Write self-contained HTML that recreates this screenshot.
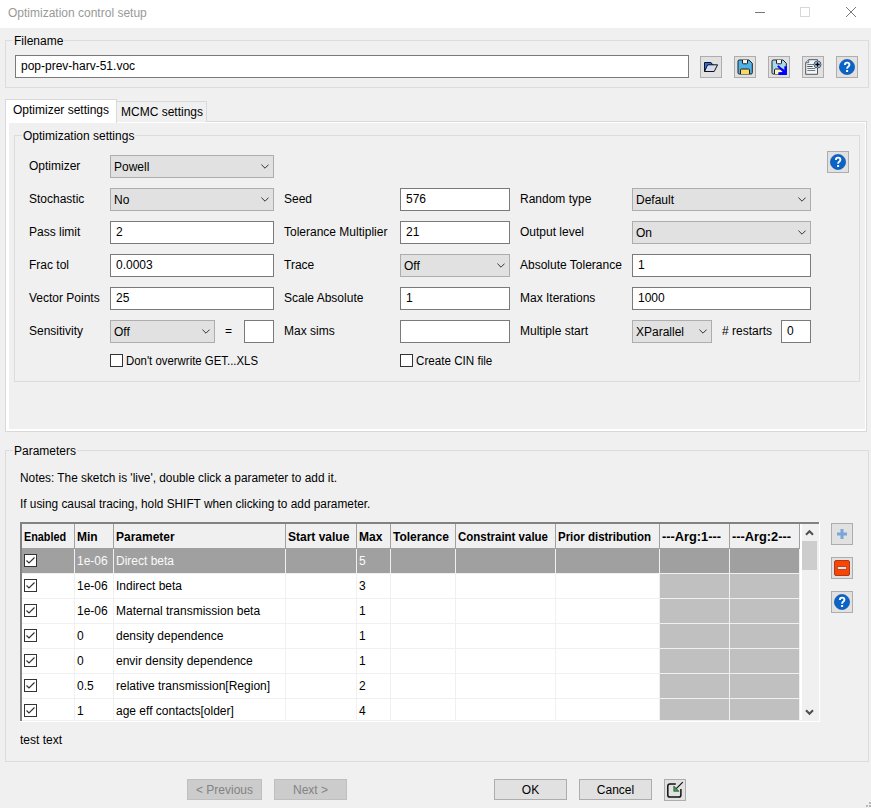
<!DOCTYPE html>
<html><head><meta charset="utf-8">
<style>
*{box-sizing:border-box;margin:0;padding:0}
html,body{width:871px;height:808px;overflow:hidden;background:#f0f0f0;font-family:"Liberation Sans",sans-serif;font-size:12px;color:#000}
.a{position:absolute}
.t{position:absolute;line-height:14px;white-space:nowrap}
.gb{position:absolute;border:1px solid #dcdcdc}
.inp{position:absolute;background:#fff;border:1px solid #7a7a7a;height:23px}
.cmb{position:absolute;background:#e1e1e1;border:1px solid #adadad;height:23px}
.chev{position:absolute;width:8px;height:5px}
.btn{position:absolute;background:#e1e1e1;border:1px solid #adadad;width:22px;height:22px}
.cb{position:absolute;width:13px;height:13px;border:1px solid #333;background:#fff}
.lbl{background:#f0f0f0;padding:0 1px}
</style></head><body>
<!-- title bar -->
<div class="a" style="left:0;top:0;width:871px;height:28px;background:#fff"></div>
<div class="t" style="left:8px;top:6px;color:#999">Optimization control setup</div>
<div class="a" style="left:755px;top:12px;width:10px;height:1px;background:#777"></div>
<div class="a" style="left:800px;top:7px;width:10px;height:10px;border:1px solid #d8d8d8"></div>
<svg class="a" style="left:845px;top:6px" width="12" height="12"><path d="M1 1L11 11M11 1L1 11" stroke="#7a7a7a" stroke-width="1"/></svg>

<!-- filename group -->
<div class="gb" style="left:5px;top:40px;width:864px;height:48px"></div>
<div class="t lbl" style="left:13px;top:34px">Filename</div>
<div class="inp" style="left:15px;top:55px;width:674px"></div>
<div class="t" style="left:21px;top:59px">pop-prev-harv-51.voc</div>
<div class="btn" style="left:700px;top:56px"><svg class="a" style="left:-1px;top:-1px" width="22" height="22" viewBox="0 0 22 22"><path d="M4.5 15.5V6.5H11L12 8.3H13V15.5Z" fill="#2a6cf5" stroke="#111" stroke-width="1"/><path d="M7.6 8.8H17.6L14.2 15.5H4.6Z" fill="#d4dcf6" stroke="#111" stroke-width="1"/></svg></div>
<div class="btn" style="left:734px;top:56px"><svg class="a" style="left:-1px;top:-1px" width="22" height="22" viewBox="0 0 22 22"><path d="M5.2 4H15L18.3 7.3V16.8Q18.3 18 17.1 18H5.2Q4 18 4 16.8V5.2Q4 4 5.2 4Z" fill="#4db3ea" stroke="#1e1e1e" stroke-width="1"/><path d="M8.5 4V7Q8.5 7.8 9.3 7.8H12.7Q13.5 7.8 13.5 7V4" fill="#f4f4f4" stroke="#1e1e1e" stroke-width="1"/><path d="M6.5 18V13.9Q6.5 13 7.4 13H14.6Q15.5 13 15.5 13.9V18" fill="#fbd864" stroke="#1e1e1e" stroke-width="1"/></svg></div>
<div class="btn" style="left:768px;top:56px"><svg class="a" style="left:-1px;top:-1px" width="22" height="22" viewBox="0 0 22 22"><path d="M5.2 4H15L18.3 7.3V16.8Q18.3 18 17.1 18H5.2Q4 18 4 16.8V5.2Q4 4 5.2 4Z" fill="#a9d9f2" stroke="#1e1e1e" stroke-width="1"/><path d="M8.5 4V7Q8.5 7.8 9.3 7.8H12.7Q13.5 7.8 13.5 7V4" fill="#f4f4f4" stroke="#1e1e1e" stroke-width="1"/><path d="M6.5 18V13.9Q6.5 13 7.4 13H14.6Q15.5 13 15.5 13.9V18" fill="#fff2b8" stroke="#1e1e1e" stroke-width="1"/><path d="M9.2 10.6L10.6 9.2L16.2 14.6L16.4 10.2H18.9V18.9H10.3V16.3L14.7 16.1Z" fill="#0000ff"/></svg></div>
<div class="btn" style="left:802px;top:56px"><svg class="a" style="left:-1px;top:-1px" width="22" height="22" viewBox="0 0 22 22"><path d="M6.7 3.7H15.5V18.3H3.7V6.7Z" fill="#eef6fc" stroke="#555" stroke-width="1"/><path d="M3.7 6.7H6.7V3.7" fill="#a8d4f4" stroke="#555" stroke-width="0.8"/><path d="M5.3 8.5H12M5.3 10.5H10.5M5.3 12.5H13.3M5.3 14.5H13.3" stroke="#777" stroke-width="1"/><path d="M5.3 10.5H10.5" stroke="#555" stroke-width="1"/><circle cx="15.5" cy="8.5" r="3.5" fill="#a6d0f8" stroke="#445" stroke-width="0.9"/><path d="M15.5 6.3V10.7M13.3 8.5H17.7" stroke="#000" stroke-width="1.3"/></svg></div>
<div class="btn" style="left:836px;top:56px"><svg class="a" style="left:-1px;top:-1px" width="22" height="22" viewBox="0 0 22 22"><circle cx="11" cy="11" r="7.6" fill="#0a64c8" stroke="#00479a" stroke-width="0.6"/><path d="M8.9 8.9Q8.9 6.6 11.1 6.6Q13.4 6.6 13.4 8.7Q13.4 9.9 12.1 10.7Q11.1 11.4 11.1 12.7" fill="none" stroke="#fff" stroke-width="1.9"/><rect x="10.1" y="14" width="2" height="2" fill="#fff"/></svg></div>

<!-- tabs -->
<div class="a" style="left:5px;top:121px;width:862px;height:311px;border:1px solid #d9d9d9;background:#fff"></div>
<div class="a" style="left:9px;top:123px;width:856px;height:306px;background:#f0f0f0"></div>
<div class="a" style="left:116px;top:101px;width:91px;height:21px;border:1px solid #d9d9d9;border-bottom:none;background:#f0f0f0"></div>
<div class="a" style="left:5px;top:99px;width:112px;height:24px;border:1px solid #d9d9d9;border-bottom:none;background:#fff"></div>
<div class="t" style="left:13px;top:103px">Optimizer settings</div>
<div class="t" style="left:121px;top:105px">MCMC settings</div>

<!-- optimization group -->
<div class="gb" style="left:14px;top:135px;width:846px;height:247px"></div>
<div class="t lbl" style="left:22px;top:129px">Optimization settings</div>
<!--OPT-->
<div class="t" style="left:29px;top:159px">Optimizer</div>
<div class="cmb" style="left:110px;top:155px;width:164px"></div>
<div class="t" style="left:114px;top:160px">Powell</div>
<svg class="chev" style="left:261px;top:164px" viewBox="0 0 8 5"><path d="M0.4 0.6L4 4.2L7.6 0.6" fill="none" stroke="#333" stroke-width="1"/></svg>
<div class="t" style="left:29px;top:192px">Stochastic</div>
<div class="cmb" style="left:110px;top:188px;width:164px"></div>
<div class="t" style="left:114px;top:193px">No</div>
<svg class="chev" style="left:261px;top:197px" viewBox="0 0 8 5"><path d="M0.4 0.6L4 4.2L7.6 0.6" fill="none" stroke="#333" stroke-width="1"/></svg>
<div class="t" style="left:284px;top:192px">Seed</div>
<div class="inp" style="left:400px;top:188px;width:110px"></div>
<div class="t" style="left:406px;top:192px">576</div>
<div class="t" style="left:520px;top:192px">Random type</div>
<div class="cmb" style="left:632px;top:188px;width:179px"></div>
<div class="t" style="left:636px;top:193px">Default</div>
<svg class="chev" style="left:798px;top:197px" viewBox="0 0 8 5"><path d="M0.4 0.6L4 4.2L7.6 0.6" fill="none" stroke="#333" stroke-width="1"/></svg>
<div class="t" style="left:29px;top:225px">Pass limit</div>
<div class="inp" style="left:110px;top:221px;width:164px"></div>
<div class="t" style="left:116px;top:225px">2</div>
<div class="t" style="left:284px;top:225px">Tolerance Multiplier</div>
<div class="inp" style="left:400px;top:221px;width:110px"></div>
<div class="t" style="left:406px;top:225px">21</div>
<div class="t" style="left:520px;top:225px">Output level</div>
<div class="cmb" style="left:632px;top:221px;width:179px"></div>
<div class="t" style="left:636px;top:226px">On</div>
<svg class="chev" style="left:798px;top:230px" viewBox="0 0 8 5"><path d="M0.4 0.6L4 4.2L7.6 0.6" fill="none" stroke="#333" stroke-width="1"/></svg>
<div class="t" style="left:29px;top:258px">Frac tol</div>
<div class="inp" style="left:110px;top:254px;width:164px"></div>
<div class="t" style="left:116px;top:258px">0.0003</div>
<div class="t" style="left:284px;top:258px">Trace</div>
<div class="cmb" style="left:400px;top:254px;width:110px"></div>
<div class="t" style="left:404px;top:259px">Off</div>
<svg class="chev" style="left:497px;top:263px" viewBox="0 0 8 5"><path d="M0.4 0.6L4 4.2L7.6 0.6" fill="none" stroke="#333" stroke-width="1"/></svg>
<div class="t" style="left:520px;top:258px">Absolute Tolerance</div>
<div class="inp" style="left:632px;top:254px;width:179px"></div>
<div class="t" style="left:638px;top:258px">1</div>
<div class="t" style="left:29px;top:291px">Vector Points</div>
<div class="inp" style="left:110px;top:287px;width:164px"></div>
<div class="t" style="left:116px;top:291px">25</div>
<div class="t" style="left:284px;top:291px">Scale Absolute</div>
<div class="inp" style="left:400px;top:287px;width:110px"></div>
<div class="t" style="left:406px;top:291px">1</div>
<div class="t" style="left:520px;top:291px">Max Iterations</div>
<div class="inp" style="left:632px;top:287px;width:179px"></div>
<div class="t" style="left:638px;top:291px">1000</div>
<div class="t" style="left:29px;top:324px">Sensitivity</div>
<div class="cmb" style="left:110px;top:320px;width:105px"></div>
<div class="t" style="left:114px;top:325px">Off</div>
<svg class="chev" style="left:202px;top:329px" viewBox="0 0 8 5"><path d="M0.4 0.6L4 4.2L7.6 0.6" fill="none" stroke="#333" stroke-width="1"/></svg>
<div class="t" style="left:225px;top:324px">=</div>
<div class="inp" style="left:244px;top:320px;width:30px"></div>
<div class="t" style="left:284px;top:324px">Max sims</div>
<div class="inp" style="left:400px;top:320px;width:110px"></div>
<div class="t" style="left:520px;top:324px">Multiple start</div>
<div class="cmb" style="left:632px;top:320px;width:80px"></div>
<div class="t" style="left:636px;top:325px">XParallel</div>
<svg class="chev" style="left:699px;top:329px" viewBox="0 0 8 5"><path d="M0.4 0.6L4 4.2L7.6 0.6" fill="none" stroke="#333" stroke-width="1"/></svg>
<div class="t" style="left:722px;top:324px"># restarts</div>
<div class="inp" style="left:781px;top:320px;width:30px"></div>
<div class="t" style="left:787px;top:324px">0</div>
<div class="cb" style="left:110px;top:354px"></div>
<div class="t" style="left:126px;top:354px;transform:scaleX(0.95);transform-origin:0 0">Don't overwrite GET...XLS</div>
<div class="cb" style="left:400px;top:354px"></div>
<div class="t" style="left:416px;top:354px;transform:scaleX(0.97);transform-origin:0 0">Create CIN file</div>
<div class="btn" style="left:827px;top:151px"><svg class="a" style="left:-1px;top:-1px" width="22" height="22" viewBox="0 0 22 22"><circle cx="11" cy="11" r="7.6" fill="#0a64c8" stroke="#00479a" stroke-width="0.6"/><path d="M8.9 8.9Q8.9 6.6 11.1 6.6Q13.4 6.6 13.4 8.7Q13.4 9.9 12.1 10.7Q11.1 11.4 11.1 12.7" fill="none" stroke="#fff" stroke-width="1.9"/><rect x="10.1" y="14" width="2" height="2" fill="#fff"/></svg></div>
<!--/OPT-->
<!-- parameters group -->
<div class="gb" style="left:5px;top:450px;width:864px;height:312px"></div>
<div class="t lbl" style="left:13px;top:444px">Parameters</div>
<div class="t" style="left:20px;top:471px;transform:scaleX(0.987);transform-origin:0 0">Notes: The sketch is 'live', double click a parameter to add it.</div>
<div class="t" style="left:20px;top:497px;transform:scaleX(0.986);transform-origin:0 0">If using causal tracing, hold SHIFT when clicking to add parameter.</div>

<!--TBL-->
<div class="a" style="left:20px;top:522px;width:800px;height:200px;background:#fff"></div>
<div class="a" style="left:22px;top:524px;width:778px;height:24px;background:#f0f0f0"></div>
<div class="a" style="left:22px;top:548px;width:778px;height:1px;background:#a0a0a0"></div>
<div class="a" style="left:660px;top:549px;width:139px;height:171px;background:#c0c0c0"></div>
<div class="a" style="left:22px;top:549px;width:777px;height:24px;background:#a0a0a0"></div>
<div class="a" style="left:22px;top:573px;width:777px;height:1px;background:#f0f0f0"></div>
<div class="a" style="left:22px;top:598px;width:777px;height:1px;background:#f0f0f0"></div>
<div class="a" style="left:22px;top:623px;width:777px;height:1px;background:#f0f0f0"></div>
<div class="a" style="left:22px;top:648px;width:777px;height:1px;background:#f0f0f0"></div>
<div class="a" style="left:22px;top:673px;width:777px;height:1px;background:#f0f0f0"></div>
<div class="a" style="left:22px;top:698px;width:777px;height:1px;background:#f0f0f0"></div>
<div class="a" style="left:74px;top:524px;width:1px;height:24px;background:#a0a0a0"></div>
<div class="a" style="left:74px;top:549px;width:1px;height:171px;background:#f0f0f0"></div>
<div class="a" style="left:113px;top:524px;width:1px;height:24px;background:#a0a0a0"></div>
<div class="a" style="left:113px;top:549px;width:1px;height:171px;background:#f0f0f0"></div>
<div class="a" style="left:285px;top:524px;width:1px;height:24px;background:#a0a0a0"></div>
<div class="a" style="left:285px;top:549px;width:1px;height:171px;background:#f0f0f0"></div>
<div class="a" style="left:356px;top:524px;width:1px;height:24px;background:#a0a0a0"></div>
<div class="a" style="left:356px;top:549px;width:1px;height:171px;background:#f0f0f0"></div>
<div class="a" style="left:390px;top:524px;width:1px;height:24px;background:#a0a0a0"></div>
<div class="a" style="left:390px;top:549px;width:1px;height:171px;background:#f0f0f0"></div>
<div class="a" style="left:455px;top:524px;width:1px;height:24px;background:#a0a0a0"></div>
<div class="a" style="left:455px;top:549px;width:1px;height:171px;background:#f0f0f0"></div>
<div class="a" style="left:555px;top:524px;width:1px;height:24px;background:#a0a0a0"></div>
<div class="a" style="left:555px;top:549px;width:1px;height:171px;background:#f0f0f0"></div>
<div class="a" style="left:659px;top:524px;width:1px;height:24px;background:#a0a0a0"></div>
<div class="a" style="left:659px;top:549px;width:1px;height:171px;background:#f0f0f0"></div>
<div class="a" style="left:729px;top:524px;width:1px;height:24px;background:#a0a0a0"></div>
<div class="a" style="left:729px;top:549px;width:1px;height:171px;background:#f0f0f0"></div>
<div class="a" style="left:799px;top:524px;width:1px;height:24px;background:#a0a0a0"></div>
<div class="a" style="left:799px;top:549px;width:1px;height:171px;background:#f0f0f0"></div>
<div class="a" style="left:20px;top:522px;width:799px;height:2px;background:#828282"></div>
<div class="a" style="left:20px;top:522px;width:2px;height:199px;background:#828282"></div>
<div class="a" style="left:818px;top:524px;width:1px;height:197px;background:#f0f0f0"></div>
<div class="a" style="left:22px;top:720px;width:797px;height:1px;background:#f0f0f0"></div>
<div class="a" style="left:20px;top:721px;width:800px;height:1px;background:#fff"></div>
<div class="a" style="left:819px;top:522px;width:1px;height:199px;background:#fff"></div>
<div class="a" style="left:802px;top:524px;width:16px;height:196px;background:#f0f0f0"></div>
<div class="a" style="left:802px;top:541px;width:15px;height:29px;background:#cdcdcd"></div>
<svg class="a" style="left:805px;top:529px" width="9" height="7" viewBox="0 0 9 7"><path d="M1 5.8L4.5 2.3L8 5.8" fill="none" stroke="#505050" stroke-width="2.1"/></svg>
<svg class="a" style="left:805px;top:709px" width="9" height="7" viewBox="0 0 9 7"><path d="M1 1.2L4.5 4.7L8 1.2" fill="none" stroke="#505050" stroke-width="2.1"/></svg>
<div class="t" style="left:24px;top:530px;font-weight:bold;transform:scaleX(0.9);transform-origin:0 0">Enabled</div>
<div class="t" style="left:77px;top:530px;font-weight:bold;">Min</div>
<div class="t" style="left:116px;top:530px;font-weight:bold;">Parameter</div>
<div class="t" style="left:288px;top:530px;font-weight:bold;">Start value</div>
<div class="t" style="left:359px;top:530px;font-weight:bold;">Max</div>
<div class="t" style="left:393px;top:530px;font-weight:bold;">Tolerance</div>
<div class="t" style="left:458px;top:530px;font-weight:bold;transform:scaleX(0.957);transform-origin:0 0">Constraint value</div>
<div class="t" style="left:558px;top:530px;font-weight:bold;transform:scaleX(0.956);transform-origin:0 0">Prior distribution</div>
<div class="t" style="left:662px;top:530px;font-weight:bold;transform:scaleX(1.067);transform-origin:0 0">---Arg:1---</div>
<div class="t" style="left:732px;top:530px;font-weight:bold;transform:scaleX(1.067);transform-origin:0 0">---Arg:2---</div>
<div class="cb" style="left:24px;top:554px"><svg class="a" style="left:0;top:0" width="11" height="11" viewBox="1 1 11 11"><path d="M2.5 6.5L5 9L10.5 3.5" fill="none" stroke="#333" stroke-width="1.2"/></svg></div>
<div class="t" style="left:77px;top:554px;color:#fafafa">1e-06</div>
<div class="t" style="left:116px;top:554px;color:#fafafa">Direct beta</div>
<div class="t" style="left:359px;top:554px;color:#fafafa">5</div>
<div class="cb" style="left:24px;top:579px"><svg class="a" style="left:0;top:0" width="11" height="11" viewBox="1 1 11 11"><path d="M2.5 6.5L5 9L10.5 3.5" fill="none" stroke="#333" stroke-width="1.2"/></svg></div>
<div class="t" style="left:77px;top:579px;">1e-06</div>
<div class="t" style="left:116px;top:579px;">Indirect beta</div>
<div class="t" style="left:359px;top:579px;">3</div>
<div class="cb" style="left:24px;top:604px"><svg class="a" style="left:0;top:0" width="11" height="11" viewBox="1 1 11 11"><path d="M2.5 6.5L5 9L10.5 3.5" fill="none" stroke="#333" stroke-width="1.2"/></svg></div>
<div class="t" style="left:77px;top:604px;">1e-06</div>
<div class="t" style="left:116px;top:604px;">Maternal transmission beta</div>
<div class="t" style="left:359px;top:604px;">1</div>
<div class="cb" style="left:24px;top:629px"><svg class="a" style="left:0;top:0" width="11" height="11" viewBox="1 1 11 11"><path d="M2.5 6.5L5 9L10.5 3.5" fill="none" stroke="#333" stroke-width="1.2"/></svg></div>
<div class="t" style="left:77px;top:629px;">0</div>
<div class="t" style="left:116px;top:629px;">density dependence</div>
<div class="t" style="left:359px;top:629px;">1</div>
<div class="cb" style="left:24px;top:654px"><svg class="a" style="left:0;top:0" width="11" height="11" viewBox="1 1 11 11"><path d="M2.5 6.5L5 9L10.5 3.5" fill="none" stroke="#333" stroke-width="1.2"/></svg></div>
<div class="t" style="left:77px;top:654px;">0</div>
<div class="t" style="left:116px;top:654px;">envir density dependence</div>
<div class="t" style="left:359px;top:654px;">1</div>
<div class="cb" style="left:24px;top:679px"><svg class="a" style="left:0;top:0" width="11" height="11" viewBox="1 1 11 11"><path d="M2.5 6.5L5 9L10.5 3.5" fill="none" stroke="#333" stroke-width="1.2"/></svg></div>
<div class="t" style="left:77px;top:679px;">0.5</div>
<div class="t" style="left:116px;top:679px;">relative transmission[Region]</div>
<div class="t" style="left:359px;top:679px;">2</div>
<div class="cb" style="left:24px;top:704px"><svg class="a" style="left:0;top:0" width="11" height="11" viewBox="1 1 11 11"><path d="M2.5 6.5L5 9L10.5 3.5" fill="none" stroke="#333" stroke-width="1.2"/></svg></div>
<div class="t" style="left:77px;top:704px;">1</div>
<div class="t" style="left:116px;top:704px;">age eff contacts[older]</div>
<div class="t" style="left:359px;top:704px;">4</div>
<div class="a" style="left:20px;top:722px;width:800px;height:30px;background:#f0f0f0"></div>
<div class="btn" style="left:831px;top:523px"><svg class="a" style="left:-1px;top:-1px" width="22" height="22" viewBox="0 0 22 22"><path d="M11 6V16M6 11H16" stroke="#7ba6d8" stroke-width="3"/></svg></div>
<div class="btn" style="left:831px;top:557px"><svg class="a" style="left:-1px;top:-1px" width="22" height="22" viewBox="0 0 22 22"><rect x="3.5" y="3.5" width="15" height="15" rx="1.5" fill="#ff4400" stroke="#8a2a10" stroke-width="0.8"/><rect x="6.5" y="9.8" width="9" height="2.4" fill="#e6eef8" stroke="#6a2a1a" stroke-width="0.5"/></svg></div>
<div class="btn" style="left:831px;top:591px"><svg class="a" style="left:-1px;top:-1px" width="22" height="22" viewBox="0 0 22 22"><circle cx="11" cy="11" r="7.6" fill="#0a64c8" stroke="#00479a" stroke-width="0.6"/><path d="M8.9 8.9Q8.9 6.6 11.1 6.6Q13.4 6.6 13.4 8.7Q13.4 9.9 12.1 10.7Q11.1 11.4 11.1 12.7" fill="none" stroke="#fff" stroke-width="1.9"/><rect x="10.1" y="14" width="2" height="2" fill="#fff"/></svg></div>
<!--/TBL-->

<div class="t" style="left:20px;top:733px">test text</div>

<!-- bottom buttons -->
<div class="a" style="left:187px;top:779px;width:75px;height:21px;background:#ccc;border:1px solid #bfbfbf"></div>
<div class="t" style="left:187px;top:783px;width:75px;text-align:center;color:#838383">&lt; Previous</div>
<div class="a" style="left:274px;top:779px;width:73px;height:21px;background:#ccc;border:1px solid #bfbfbf"></div>
<div class="t" style="left:274px;top:783px;width:73px;text-align:center;color:#838383">Next &gt;</div>
<div class="a" style="left:494px;top:779px;width:73px;height:21px;background:#e1e1e1;border:1px solid #adadad"></div>
<div class="t" style="left:494px;top:783px;width:73px;text-align:center">OK</div>
<div class="a" style="left:579px;top:779px;width:73px;height:21px;background:#e1e1e1;border:1px solid #adadad"></div>
<div class="t" style="left:579px;top:783px;width:73px;text-align:center">Cancel</div>
<div class="btn" style="left:664px;top:779px"><svg class="a" style="left:-1px;top:-1px" width="22" height="22" viewBox="0 0 22 22"><path d="M11.8 5H6Q3.8 5 3.8 7.2V15.9Q3.8 18.1 6 18.1H14.7Q16.9 18.1 16.9 15.9V10" fill="none" stroke="#111" stroke-width="1.5"/><path d="M18.8 3.1L12.2 9.7" stroke="#111" stroke-width="1.2"/><path d="M9.8 7L9.8 12.3L15 12.3Z" fill="#2fa84a" stroke="#111" stroke-width="0.5"/></svg></div>
<div class="a" style="left:869px;top:802px;width:2px;height:2px;background:#b8b8b8"></div><div class="a" style="left:866px;top:805px;width:2px;height:2px;background:#b8b8b8"></div><div class="a" style="left:869px;top:805px;width:2px;height:2px;background:#b8b8b8"></div>
</body></html>
